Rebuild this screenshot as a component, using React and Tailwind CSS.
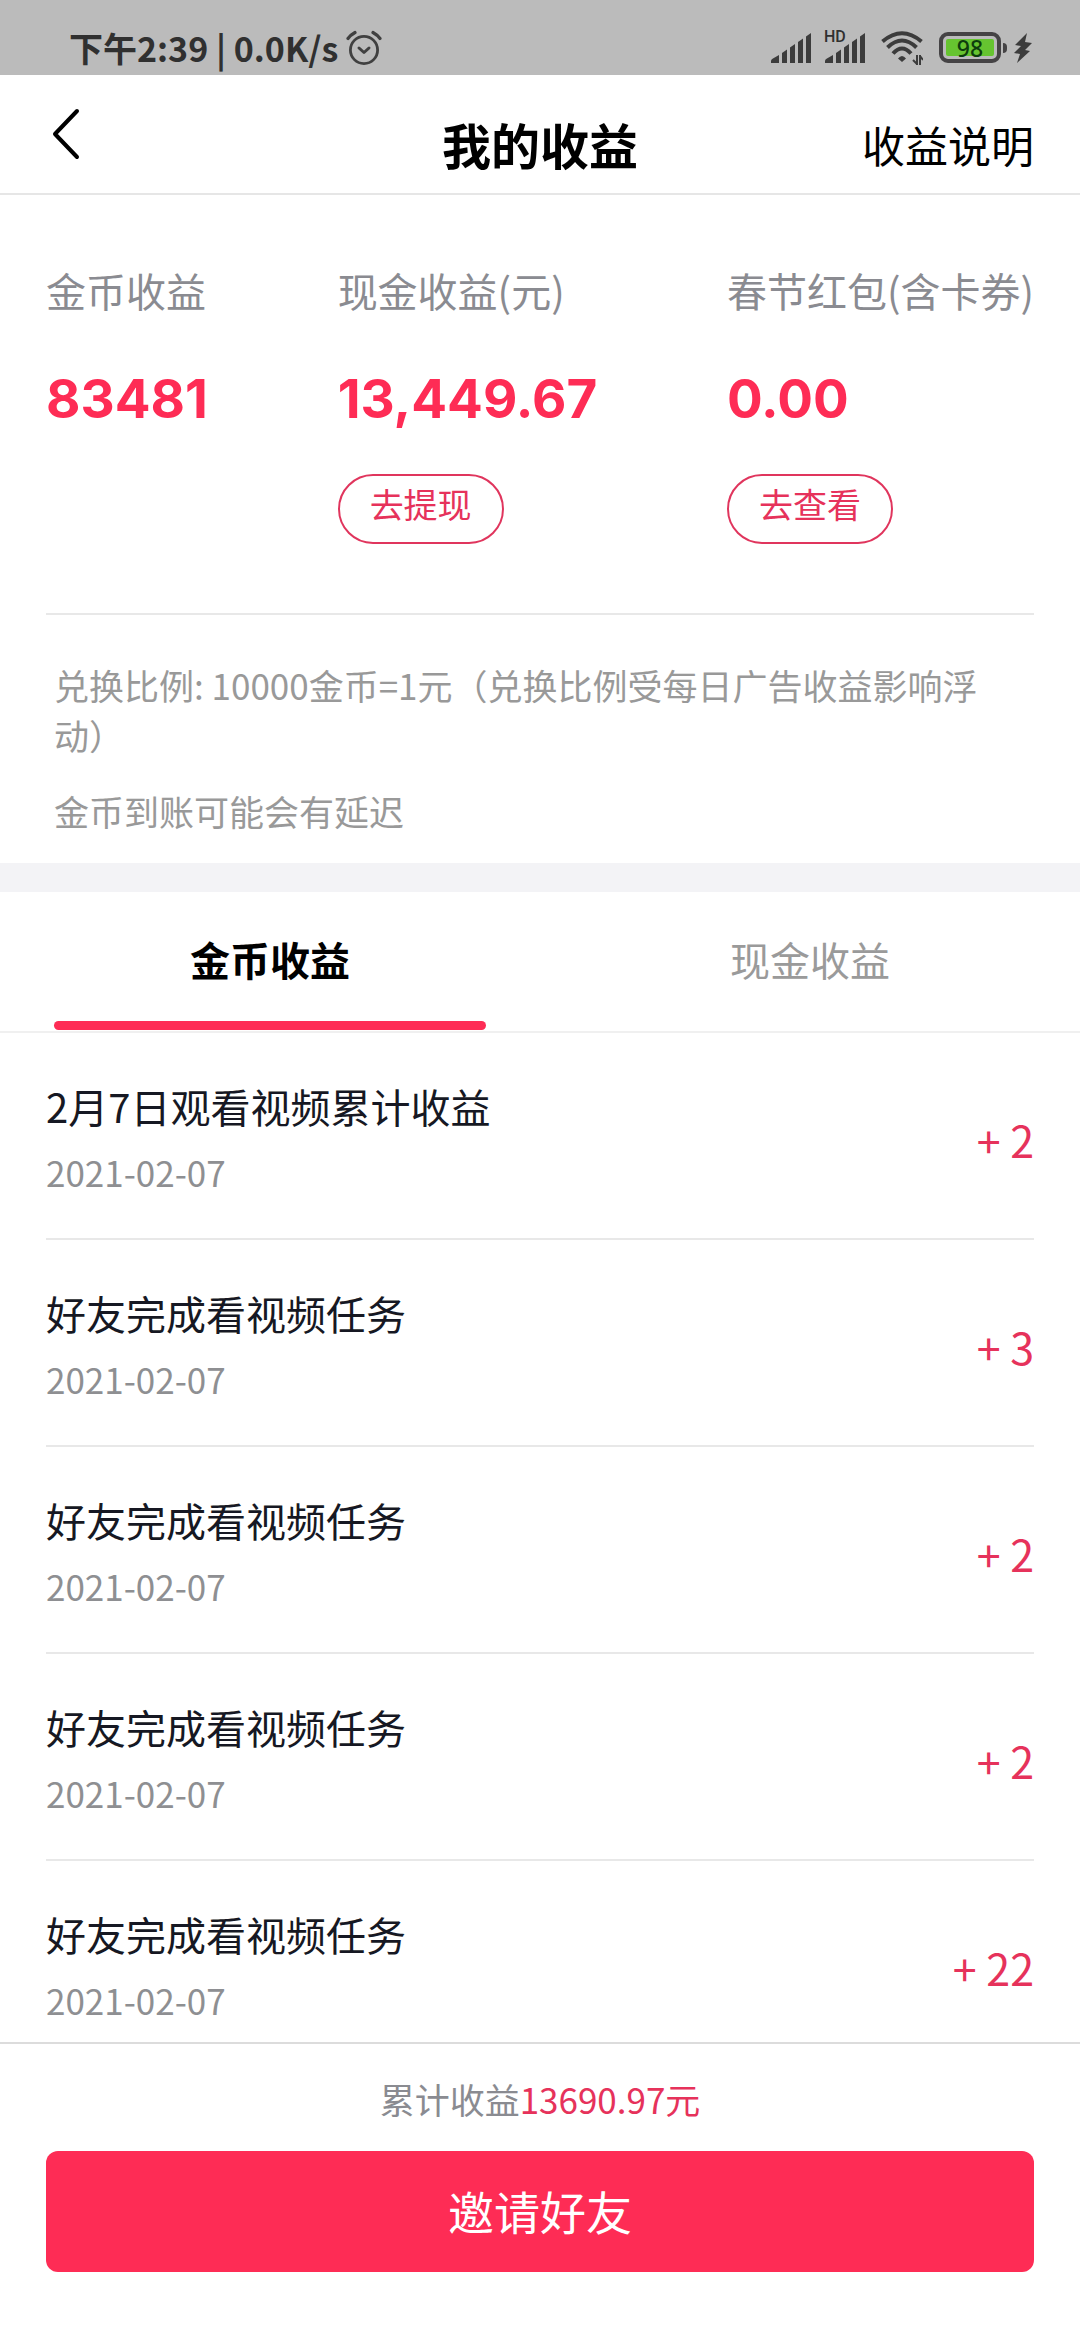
import React from 'react'

const totals = [
  { label: '金币收益', value: '83481' },
  { label: '现金收益(元)', value: '13,449.67', action: '去提现' },
  { label: '春节红包(含卡券)', value: '0.00', action: '去查看' },
]

const records = [
  { id: 1, title: '2月7日观看视频累计收益', date: '2021-02-07', amount: 2 },
  { id: 2, title: '好友完成看视频任务', date: '2021-02-07', amount: 3 },
  { id: 3, title: '好友完成看视频任务', date: '2021-02-07', amount: 2 },
  { id: 4, title: '好友完成看视频任务', date: '2021-02-07', amount: 2 },
  { id: 5, title: '好友完成看视频任务', date: '2021-02-07', amount: 22 },
]

const AlarmIcon = () => (
  <svg width="36" height="36" viewBox="0 0 36 36" fill="none" stroke="#404040" strokeWidth="2.8" strokeLinecap="round" strokeLinejoin="round">
    <circle cx="18" cy="20" r="13.6" />
    <path d="M13 18l5 4.500 5-4.500" strokeWidth="3" />
    <path d="M2 8.500Q4.500 5 9 2.500M34 8.500Q31.500 5 27 2.500" strokeWidth="3.2" />
  </svg>
)

const SignalIcon = () => (
  <svg width="40" height="30" viewBox="0 0 40 30" fill="#3c3c3c">
    <path d="M0 30v-2q0-1.500 1.500-2.300L8 22v8z" />
    <path d="M11 30V20l5-3.500V30z" />
    <path d="M19 30V14.500L24 11v19z" />
    <path d="M27 30V9l5-3.500V30z" />
    <path d="M35 30V3.500L40 0v30z" />
  </svg>
)

const WifiIcon = () => (
  <svg width="42" height="34" viewBox="0 0 42 34" fill="none" stroke="#3c3c3c" strokeWidth="4">
    <path d="M1.500 10.500Q21-6 40.500 10.500" />
    <path d="M6.500 16.500Q21 2.500 35.500 16.500" />
    <path d="M12 22.500Q21 12.500 30 22.500" />
    <path d="M17 27.500Q21 22.500 25 27.500L21 31z" fill="#3c3c3c" stroke="none" />
    <path d="M36 24v10M32 29l4 4M39 34V24M42 29l-3-4" strokeWidth="2" />
  </svg>
)

const BoltIcon = () => (
  <svg width="18" height="30" viewBox="0 0 18 30" fill="#3c3c3c">
    <path d="M13 0L1 12l6 1-7 7 6 1-3 9 13-12-5-1 7-7-7-1z" />
  </svg>
)

const StatusBar = () => (
  <div className="flex items-end justify-between bg-[#bbbbbb] pt-6 pr-12 pb-1 pl-[69px] text-[#303030]">
    <div className="flex items-center gap-2">
      <span className="text-[34px] leading-[47px] font-bold">下午2:39 | 0.0K/s</span>
      <AlarmIcon />
    </div>
    <div className="flex h-[47px] items-center">
      <SignalIcon />
      <div className="relative ml-[14px]">
        <SignalIcon />
        <span className="absolute -top-1 -left-px bg-[#bbbbbb] font-['Roboto'] text-[16px] leading-4 font-medium">HD</span>
      </div>
      <div className="ml-4">
        <WifiIcon />
      </div>
      {/* Battery */}
      <div className="ml-4 flex h-[31px] w-[62px] items-center justify-center rounded-[9px] border-4 border-[#454345] p-[3px]">
        <span className="flex h-full w-full items-center justify-center rounded-xs bg-[#66c430] font-['Noto_Sans'] text-[23px] leading-4 font-medium text-[#0d3d0d]">
          98
        </span>
      </div>
      <span className="ml-[2px] h-[10px] w-1 rounded-r bg-[#454345]"></span>
      <div className="ml-[7px]">
        <BoltIcon />
      </div>
    </div>
  </div>
)

const Header = () => (
  <header className="grid grid-cols-3 items-center border-b-2 border-[#e6e6e6] px-[46px] pt-[22px] pb-[2px] text-black">
    <button type="button" aria-label="返回" className="mb-5 justify-self-start p-1">
      <svg width="30" height="54" viewBox="0 0 30 54" fill="none" stroke="currentColor" strokeWidth="4" strokeLinecap="round" strokeLinejoin="round">
        <path d="M27 4L5 27l22 23" />
      </svg>
    </button>
    <h1 className="justify-self-center text-[49px] leading-[94px] font-bold">我的收益</h1>
    <a href="#rules" className="justify-self-end text-[43px] leading-[94px]">收益说明</a>
  </header>
)

const Totals = () => (
  <section className="mx-[46px] flex justify-between border-b-2 border-[#e8e8e8] pt-[65px] pb-[69px]">
    {totals.map((item) => (
      <div key={item.label} className="flex flex-col items-start">
        <span className="text-[40px] leading-[60px] text-[#8a8b91]">{item.label}</span>
        <span className="mt-[34px] font-['Inter'] text-[53px] leading-[90px] font-bold text-[#fe2c55]">{item.value}</span>
        {item.action && (
          <button type="button" className="mt-[30px] rounded-full border-2 border-[#e0355d] px-[30px] pt-1 pb-[14px] text-[34px] leading-[48px] text-[#e6325b]">
            {item.action}
          </button>
        )}
      </div>
    ))}
  </section>
)

const Notes = () => (
  <section className="border-b-[29px] border-[#f3f3f6] px-[54px] pt-[45px] pb-[27px] text-[35px] leading-[50px] text-[#999999]">
    <p>兑换比例: 10000金币=1元（兑换比例受每日广告收益影响浮动）</p>
    <p className="mt-[26px]">金币到账可能会有延迟</p>
  </section>
)

const Tabs = () => (
  <div role="tablist" className="grid grid-cols-2 border-b-2 border-[#f0f0f0] pb-px text-[40px] leading-[60px]">
    <button type="button" role="tab" aria-selected="true" className="flex flex-col items-center pt-[37px] font-bold text-black">
      金币收益
      <span className="mt-8 h-[9px] w-4/5 rounded-full bg-[#fe2c55]"></span>
    </button>
    <button type="button" role="tab" aria-selected="false" className="flex flex-col items-center pt-[37px] text-[#9a9a9a]">
      现金收益
    </button>
  </div>
)

const RecordRow = ({ record }) => (
  <li className="flex items-center justify-between border-b-2 border-[#e8e8e8] pt-[43px] pb-9">
    <div>
      <p className="text-[40px] leading-[60px] text-[#161823]">{record.title}</p>
      <p className="mt-[6px] text-[35px] leading-[60px] text-[#8e8f92]">{record.date}</p>
    </div>
    <span className="text-[43px] leading-[60px] text-[#e6325b]">+ {record.amount}</span>
  </li>
)

const Footer = () => (
  <footer className="border-t-2 border-[#dcdcdc] bg-white px-[46px] pt-[30px] pb-[68px] text-center">
    <p className="text-[35px] leading-[50px] text-[#8a8b91]">
      累计收益<span className="text-[#e6325b]">13690.97元</span>
    </p>
    <button type="button" className="mt-[27px] w-full rounded-xl bg-[#fe2c55] pt-6 pb-[26px] text-[46px] leading-[71px] text-white">
      邀请好友
    </button>
  </footer>
)

const App = () => {
  return (
    <div lang="zh-CN" className="flex h-screen flex-col bg-white font-['Noto_Sans_CJK_SC',sans-serif]">
      <StatusBar />
      <Header />
      <Totals />
      <Notes />
      <Tabs />
      <ul className="min-h-0 flex-1 overflow-hidden px-[46px]">
        {records.map((record) => (
          <RecordRow key={record.id} record={record} />
        ))}
      </ul>
      <Footer />
    </div>
  )
}

export default App
